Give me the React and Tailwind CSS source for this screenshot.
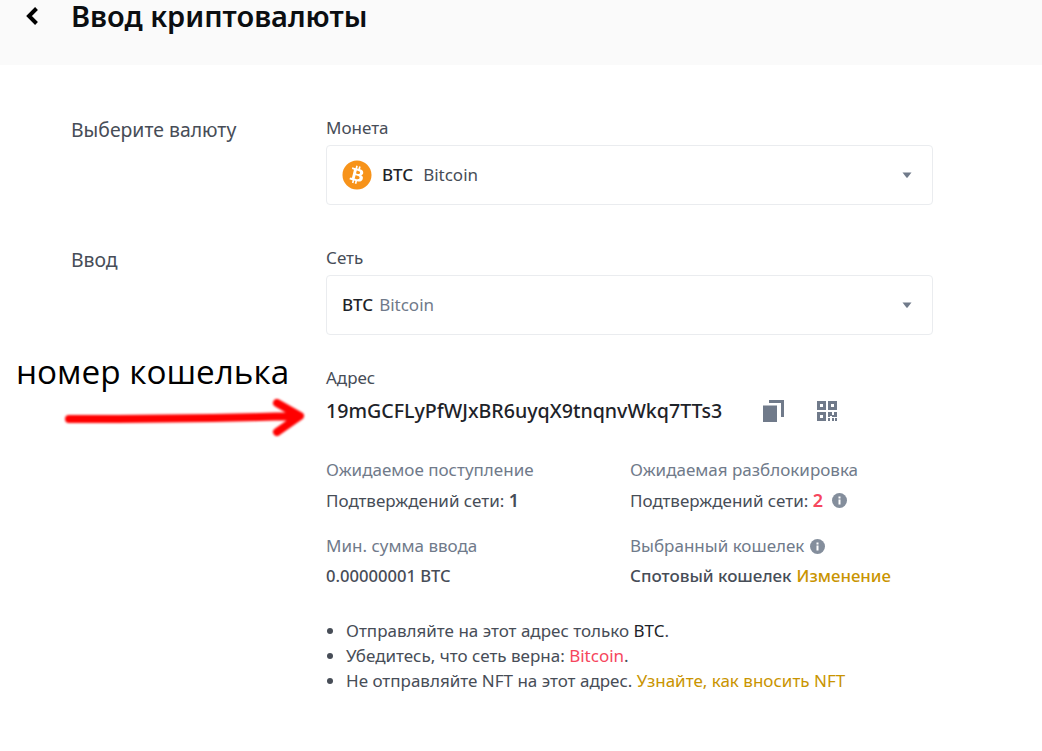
import { FaBitcoin } from "react-icons/fa";

const font = { fontFamily: '"Noto Sans", "Roboto", sans-serif' };

const Caret = () => (
  <svg width="10" height="6" viewBox="0 0 10 6" className="text-[#707a8a]">
    <path d="M0.5 0.5h9L5.600 5.400a.8.8 0 0 1-1.200 0z" fill="currentColor" />
  </svg>
);

const CopyIcon = () => (
  <svg width="22" height="24" viewBox="0 0 22 24" fill="#707a8a">
    <path d="M7 1h15v17h-3V4H7z" />
    <rect x="1" y="6.500" width="14" height="16.500" />
  </svg>
);

const QrIcon = () => (
  <svg width="20" height="20" viewBox="0 0 20 20" fill="#707a8a" fillRule="evenodd">
    <path d="M0 0h9v9H0zM3 3v3h3V3z" />
    <path d="M11 0h9v9h-9zM14 3v3h3V3z" />
    <path d="M0 11h9v9H0zM3 14v3h3v-3z" />
    <path d="M11 11h4v3h2v-3h3v5h-5v-1h-2v1h-2zM11 17h2v3h-2zM15 17h2v3h-2zM18 17h2v3h-2z" />
  </svg>
);

const InfoIcon = () => (
  <svg width="15" height="15" viewBox="0 0 15 15">
    <circle cx="7.500" cy="7.500" r="7.500" fill="#848e9c" />
    <rect x="6.500" y="6.500" width="2" height="5" fill="#fff" />
    <rect x="6.500" y="3.500" width="2" height="2" fill="#fff" />
  </svg>
);

const Select = ({ children }) => (
  <div className="mt-[5px] flex h-[60px] items-center justify-between rounded border border-[#eaecef] pl-[15px] pr-5">
    <div className="flex items-center">{children}</div>
    <Caret />
  </div>
);

export default function App() {
  return (
    <div className="relative h-[751px] overflow-hidden bg-white text-[17px] text-[#1e2329]" style={font}>
      <header className="flex h-[65px] bg-[#fafafa] pl-[24px]">
        <svg width="15" height="20" viewBox="0 0 15 20" className="mt-[6px]">
          <path d="M12.500 2.500 5 10l7.500 7.500" fill="none" stroke="#000" strokeWidth="4" />
        </svg>
        <h1 className="ml-[32px] text-[29px] leading-[32px] font-semibold text-[#0b0e11]">Ввод криптовалюты</h1>
      </header>

      <main className="flex pt-[51px] pl-[71px]">
        <div className="w-[255px] text-[19.4px] text-[#474d57]">
          <div className="mt-[2px] leading-6">Выберите валюту</div>
          <div className="mt-[106px] leading-6">Ввод</div>
        </div>

        <div className="w-[607px]">
          <div className="leading-6 text-[#474d57]">Монета</div>
          <Select>
            <span className="relative flex h-[30px] w-[30px] items-center justify-center rounded-full bg-white">
              <FaBitcoin size={30} color="#f7931a" />
            </span>
            <span className="ml-[10px] font-medium">BTC</span>
            <span className="ml-[10px] text-[#474d57]">Bitcoin</span>
          </Select>

          <div className="mt-[41px] leading-6 text-[#474d57]">Сеть</div>
          <Select>
            <span className="font-medium">BTC</span>
            <span className="ml-[6px] text-[#707a8a]">Bitcoin</span>
          </Select>

          <div className="mt-[31px] leading-6 text-[#474d57]">Адрес</div>
          <div className="mt-[9px] flex h-6 items-center">
            <span className="w-[396px] text-[19.600px] font-medium whitespace-nowrap text-[#1e2329]">19mGCFLyPfWJxBR6uyqX9tnqnvWkq7TTs3</span>
            <span className="ml-[40px] flex items-center">
              <CopyIcon />
              <span className="ml-[33px]"><QrIcon /></span>
            </span>
          </div>

          <div className="mt-[35px] grid grid-cols-[304px_1fr] gap-y-[20px] leading-6">
            <div>
              <div className="text-[#707a8a]">Ожидаемое поступление</div>
              <div className="mt-[4px] text-[#474d57]">Подтверждений сети: <span className="text-lg font-semibold">1</span></div>
            </div>
            <div>
              <div className="text-[#707a8a]">Ожидаемая разблокировка</div>
              <div className="mt-[4px] flex items-center text-[#474d57]">
                <span>Подтверждений сети: <span className="text-lg font-semibold text-[#f6465d]">2</span></span>
                <span className="ml-[9px]"><InfoIcon /></span>
              </div>
            </div>
            <div>
              <div className="flex items-center text-[#707a8a]">Мин. сумма ввода</div>
              <div className="mt-[6px] text-[16.600px] font-medium text-[#474d57]">0.00000001 BTC</div>
            </div>
            <div>
              <div className="flex items-center text-[#707a8a]">
                Выбранный кошелек
                <span className="ml-[6px]"><InfoIcon /></span>
              </div>
              <div className="mt-[6px] flex font-medium text-[#474d57]">
                Спотовый кошелек
                <span className="ml-[5px] text-[16.800px] text-[#c99400]">Изменение</span>
              </div>
            </div>
          </div>

          <ul className="mt-[30px] list-disc pl-5 leading-[25px] text-[#474d57]">
            <li>Отправляйте на этот адрес только <span className="text-[#1e2329]">BTC</span>.</li>
            <li>Убедитесь, что сеть верна: <span className="text-[#f6465d]">Bitcoin</span>.</li>
            <li>Не отправляйте NFT на этот адрес. <span className="text-[#c99400]">Узнайте, как вносить NFT</span></li>
          </ul>
        </div>
      </main>

      {/* подпись и стрелка поверх скриншота */}
      <div className="absolute top-[347px] left-[16px] text-[33.300px] leading-[48px] text-black" style={{ fontFamily: '"Open Sans", sans-serif' }}>
        номер кошелька
      </div>
      <svg width="260" height="50" viewBox="0 0 260 50" className="absolute top-[395px] left-[55px] blur-[1px]">
        <path d="M14 24C90 24 170 23 244 21M222 8 245 21 222 37" fill="none" stroke="#ff0000" strokeWidth="8" strokeLinecap="round" strokeLinejoin="round" />
      </svg>
    </div>
  );
}
